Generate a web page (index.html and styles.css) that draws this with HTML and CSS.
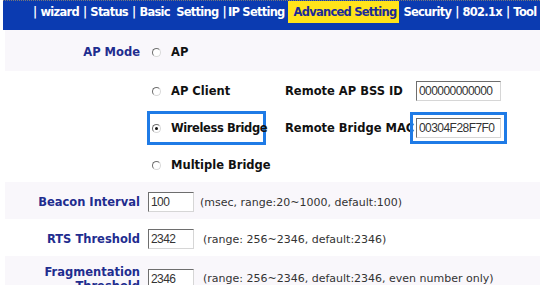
FILE: index.html
```html
<!DOCTYPE html>
<html lang="en">
<head>
  <meta charset="UTF-8" />
  <title>Advanced Setting</title>
  <link rel="stylesheet" href="styles.css">
</head>
<body>

<div class="nav">
  <span class="sep">|</span><span>wizard</span>
  <span class="sep">|</span><span>Status</span>
  <span class="sep">|</span><span>Basic&nbsp; Setting</span>
  <span class="sep near">|</span><span>IP Setting</span>
  <span class="on">Advanced Setting</span>
  <span>Security</span>
  <span class="sep">|</span><span>802.1x</span>
  <span class="sep">|</span><span>Tool</span>
</div>

<div class="form">
  <div class="row shade first">
    <div class="label">AP Mode</div>
    <div class="opt"><span class="radio"></span><b>AP</b></div>
  </div>

  <div class="row">
    <div class="label"></div>
    <div class="opt"><span class="radio"></span><b>AP Client</b></div>
    <div class="pair">
      <b>Remote AP BSS ID</b>
      <input type="text" class="txt mac" value="000000000000" />
    </div>
  </div>

  <div class="row">
    <div class="label"></div>
    <div class="opt">
      <span class="hl"><span class="radio checked"></span><b class="over">Wireless Bridge</b></span>
    </div>
    <div class="pair">
      <b>Remote Bridge MAC</b>
      <input type="text" class="txt mac boxed" value="00304F28F7F0" />
    </div>
  </div>

  <div class="row">
    <div class="label"></div>
    <div class="opt"><span class="radio"></span><b>Multiple Bridge</b></div>
  </div>

  <div class="row shade">
    <div class="label">Beacon Interval</div>
    <div class="field tight">
      <input type="text" class="txt short" value="100" />
      <span class="help">(msec, range:20~1000, default:100)</span>
    </div>
  </div>

  <div class="row">
    <div class="label">RTS Threshold</div>
    <div class="field">
      <input type="text" class="txt short" value="2342" />
      <span class="help">(range: 256~2346, default:2346)</span>
    </div>
  </div>

  <div class="row shade last">
    <div class="label">Fragmentation Threshold</div>
    <div class="field">
      <input type="text" class="txt short" value="2346" />
      <span class="help">(range: 256~2346, default:2346, even number only)</span>
    </div>
  </div>
</div>

</body>
</html>
```

FILE: styles.css
```css
body {
  margin: 0;
  background: #fff;
  font-family: "DejaVu Sans", Verdana, sans-serif;
  overflow: hidden;
}
.nav {
  display: flex;
  align-items: flex-start;
  gap: 4px;
  height: 29px;
  margin-left: 3px;
  padding-left: 30px;
  background: #0b3bb1;
  border-top: 1px dotted #777;
  color: #fff;
  font-family: "DejaVu Sans", sans-serif;
  font-weight: bold;
  font-size: 11.5px;
  letter-spacing: -0.75px;
  line-height: 14px;
  white-space: nowrap;
}
.nav span {
  padding-top: 4px;
}
.nav .near {
  margin-right: -2px;
}
.nav .on {
  height: 18px;
  margin-left: -1px;
  padding: 4px 3px 0 6px;
  background: #ffe31a;
  color: #1b2a98;
}
.form {
  margin-left: 5px;
}
.row {
  display: grid;
  grid-template-columns: 142px 138px 1fr;
  align-items: center;
  box-sizing: border-box;
  height: 37px;
  padding-top: 3px;
}
.row.first {
  height: 41px;
}
.row.last {
  height: 42px;
}
.shade {
  background: #f9f7fb;
}
.label {
  padding-right: 7px;
  text-align: right;
  color: #1f2d8f;
  font-weight: bold;
  font-size: 11.5px;
  line-height: 14px;
}
.opt {
  display: flex;
  align-items: center;
  padding-left: 5px;
  font-size: 11.5px;
  color: #111;
  white-space: nowrap;
}
.opt b, .pair b {
  font-size: 11.5px;
  color: #111;
}
.radio {
  display: inline-block;
  flex: none;
  box-sizing: border-box;
  width: 9px;
  height: 9px;
  margin-right: 10px;
  border-radius: 50%;
  border: 1px solid;
  border-color: #6f6f6f #d8d8d8 #d8d8d8 #6f6f6f;
  background: #fff;
  position: relative;
}
.radio.checked::after {
  content: "";
  position: absolute;
  left: 2px;
  top: 2px;
  width: 3px;
  height: 3px;
  border-radius: 50%;
  background: #111;
}
.hl {
  display: inline-flex;
  align-items: center;
  width: 111px;
  margin-left: -2px;
  padding: 7px 0 7px 2px;
  outline: 3px solid #1f7be6;
}
.over {
  position: relative;
  z-index: 1;
  letter-spacing: -0.4px;
}
.pair {
  display: grid;
  grid-template-columns: 131px auto;
  align-items: center;
  justify-items: start;
}
.txt {
  box-sizing: border-box;
  height: 20px;
  margin: 0;
  padding: 0 2px;
  border: 1px solid;
  border-color: #6e6e6e #d6d6d6 #d6d6d6 #6e6e6e;
  background: #fff;
  color: #333;
  font-family: "Liberation Sans", Arial, sans-serif;
  font-size: 12px;
  letter-spacing: -0.55px;
}
.mac {
  width: 85px;
}
.boxed {
  outline: 3px solid #1f7be6;
  outline-offset: 3px;
}
.field {
  grid-column: 2 / 4;
  display: flex;
  align-items: center;
  gap: 9px;
  padding-left: 1px;
}
.field.tight {
  gap: 6px;
}
.short {
  width: 46px;
}
.help {
  font-size: 11px;
  color: #333;
  white-space: nowrap;
}
```
